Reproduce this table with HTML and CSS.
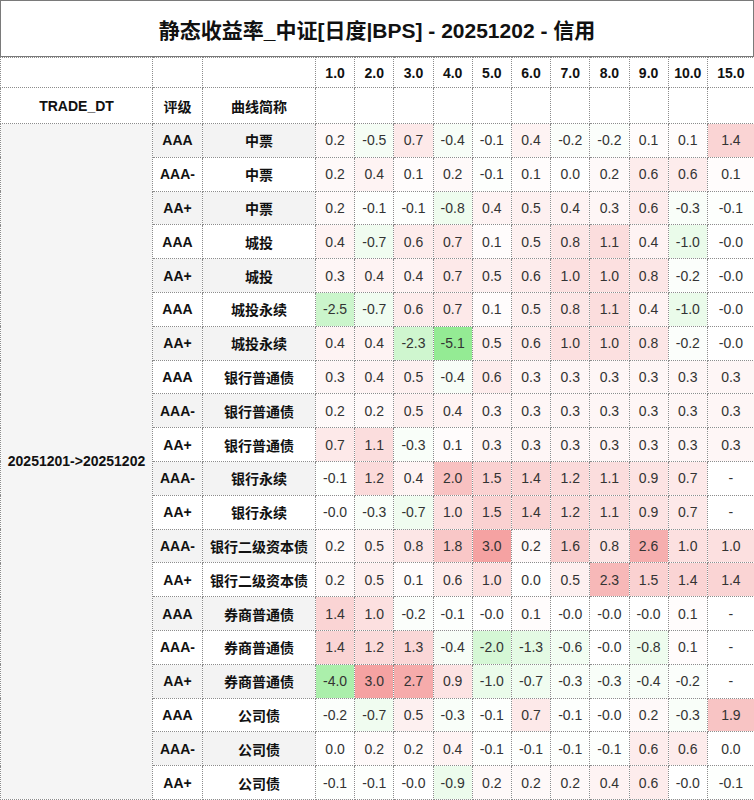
FILE: index.html
```html
<!DOCTYPE html>
<html lang="zh-CN">
<head>
<meta charset="utf-8">
<title>静态收益率_中证</title>
<link rel="stylesheet" href="styles.css">
</head>
<body>
<div class="title">静态收益率_中证[日度|BPS] - 20251202 - 信用</div>
<table class="grid">
  <colgroup>
    <col class="c-date"><col class="c-rating"><col class="c-name">
    <col class="c-num"><col class="c-num"><col class="c-num"><col class="c-num"><col class="c-num">
    <col class="c-num"><col class="c-num"><col class="c-num"><col class="c-num"><col class="c-num">
    <col class="c-last">
  </colgroup>
  <thead>
    <tr class="head1">
      <th></th><th></th><th></th>
      <th>1.0</th><th>2.0</th><th>3.0</th><th>4.0</th><th>5.0</th><th>6.0</th>
      <th>7.0</th><th>8.0</th><th>9.0</th><th>10.0</th><th>15.0</th>
    </tr>
    <tr class="head2">
      <th>TRADE_DT</th><th>评级</th><th>曲线简称</th>
      <th></th><th></th><th></th><th></th><th></th><th></th>
      <th></th><th></th><th></th><th></th><th></th>
    </tr>
  </thead>
  <tbody id="rows"></tbody>
</table>
<script src="script.js"></script>
</body>
</html>
```

FILE: styles.css
```css
html, body {
  margin: 0;
  padding: 0;
  background: #ffffff;
}

body {
  width: 754px;
  font-family: "Liberation Sans", "Noto Sans CJK SC", sans-serif;
  color: #111111;
}

.title {
  box-sizing: border-box;
  height: 57px;
  border: 1px solid #7a7a7a;
  display: flex;
  align-items: center;
  justify-content: center;
  font-size: 21px;
  font-weight: bold;
  color: #111111;
}

.grid {
  width: 754px;
  table-layout: fixed;
  border-collapse: collapse;
  font-size: 14px;
}

.c-date { width: 152px; }
.c-rating { width: 50px; }
.c-name { width: 113px; }
.c-num { width: 39.2px; }
.c-last { width: 47px; }

.grid th,
.grid td {
  border: 1px dotted #8c8c8c;
  padding: 0;
  text-align: center;
  vertical-align: middle;
  white-space: nowrap;
  overflow: hidden;
}

.grid th {
  font-weight: bold;
  color: #111111;
}

.head1 { height: 30px; }
.head2 { height: 36px; }

.data-row { height: 33.8px; }

.date-cell {
  background: #f5f5f5;
  font-weight: bold;
  color: #111111;
}

.label {
  font-weight: bold;
  color: #111111;
}

.data-row.odd .label {
  background: #f3f3f3;
}

.num {
  color: #333333;
}
```

FILE: script.js
```js
(function () {
  var rows = [
    ["AAA", "中票", "0.2 -0.5 0.7 -0.4 -0.1 0.4 -0.2 -0.2 0.1 0.1 1.4"],
    ["AAA-", "中票", "0.2 0.4 0.1 0.2 -0.1 0.1 0.0 0.2 0.6 0.6 0.1"],
    ["AA+", "中票", "0.2 -0.1 -0.1 -0.8 0.4 0.5 0.4 0.3 0.6 -0.3 -0.1"],
    ["AAA", "城投", "0.4 -0.7 0.6 0.7 0.1 0.5 0.8 1.1 0.4 -1.0 -0.0"],
    ["AA+", "城投", "0.3 0.4 0.4 0.7 0.5 0.6 1.0 1.0 0.8 -0.2 -0.0"],
    ["AAA", "城投永续", "-2.5 -0.7 0.6 0.7 0.1 0.5 0.8 1.1 0.4 -1.0 -0.0"],
    ["AA+", "城投永续", "0.4 0.4 -2.3 -5.1 0.5 0.6 1.0 1.0 0.8 -0.2 -0.0"],
    ["AAA", "银行普通债", "0.3 0.4 0.5 -0.4 0.6 0.3 0.3 0.3 0.3 0.3 0.3"],
    ["AAA-", "银行普通债", "0.2 0.2 0.5 0.4 0.3 0.3 0.3 0.3 0.3 0.3 0.3"],
    ["AA+", "银行普通债", "0.7 1.1 -0.3 0.1 0.3 0.3 0.3 0.3 0.3 0.3 0.3"],
    ["AAA-", "银行永续", "-0.1 1.2 0.4 2.0 1.5 1.4 1.2 1.1 0.9 0.7 -"],
    ["AA+", "银行永续", "-0.0 -0.3 -0.7 1.0 1.5 1.4 1.2 1.1 0.9 0.7 -"],
    ["AAA-", "银行二级资本债", "0.2 0.5 0.8 1.8 3.0 0.2 1.6 0.8 2.6 1.0 1.0"],
    ["AA+", "银行二级资本债", "0.2 0.5 0.1 0.6 1.0 0.0 0.5 2.3 1.5 1.4 1.4"],
    ["AAA", "券商普通债", "1.4 1.0 -0.2 -0.1 -0.0 0.1 -0.0 -0.0 -0.0 0.1 -"],
    ["AAA-", "券商普通债", "1.4 1.2 1.3 -0.4 -2.0 -1.3 -0.6 -0.0 -0.8 0.1 -"],
    ["AA+", "券商普通债", "-4.0 3.0 2.7 0.9 -1.0 -0.7 -0.3 -0.3 -0.4 -0.2 -"],
    ["AAA", "公司债", "-0.2 -0.7 0.5 -0.3 -0.1 0.7 -0.1 -0.0 0.2 -0.3 1.9"],
    ["AAA-", "公司债", "0.0 0.2 0.2 0.4 -0.1 -0.1 -0.1 -0.1 0.6 0.6 0.0"],
    ["AA+", "公司债", "-0.1 -0.1 -0.0 -0.9 0.2 0.2 0.2 0.4 0.6 -0.0 -0.1"]
  ];

  function colour(v) {
    if (isNaN(v) || v === 0) { return ""; }
    var r, g, b;
    if (v > 0) {
      var t = Math.min(v, 3.2);
      r = 255 - 3.5 * t;
      g = 255 - 31 * t;
      b = g;
    } else {
      var s = Math.min(-v, 5.2);
      r = 255 - 21 * s;
      g = 255 - 4 * s;
      b = r;
    }
    return "rgb(" + Math.round(r) + "," + Math.round(g) + "," + Math.round(b) + ")";
  }

  var body = document.getElementById("rows");
  rows.forEach(function (row, i) {
    var tr = document.createElement("tr");
    tr.className = "data-row" + (i % 2 === 0 ? " odd" : "");
    if (i === 0) {
      var d = document.createElement("td");
      d.className = "date-cell";
      d.rowSpan = rows.length;
      d.textContent = "20251201->20251202";
      tr.appendChild(d);
    }
    var r1 = document.createElement("td");
    r1.className = "label";
    r1.textContent = row[0];
    tr.appendChild(r1);
    var r2 = document.createElement("td");
    r2.className = "label";
    r2.textContent = row[1];
    tr.appendChild(r2);
    row[2].split(" ").forEach(function (s) {
      var td = document.createElement("td");
      td.className = "num";
      td.textContent = s;
      var c = colour(parseFloat(s));
      if (c) { td.style.background = c; }
      tr.appendChild(td);
    });
    body.appendChild(tr);
  });
})();
```
